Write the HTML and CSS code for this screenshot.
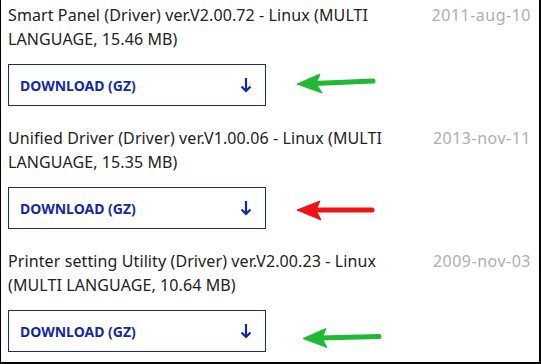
FILE: index.html
```html
<!DOCTYPE html>
<html lang="en">
<head>
    <meta charset="UTF-8">
    <meta name="viewport" content="width=device-width, initial-scale=1.0">
    <title>Linux Drivers</title>
    <link rel="stylesheet" href="styles.css">
</head>
<body>
    <div class="frame">
        <ul class="downloads">
            <li class="item">
                <p class="desc">Smart Panel (Driver) ver.V2.00.72 - Linux (MULTI LANGUAGE, 15.46 MB)</p>
                <span class="date">2011-aug-10</span>
                <a class="btn" href="#">
                    <span>DOWNLOAD (GZ)</span>
                    <svg class="dl-icon" width="12" height="16" viewBox="0 0 12 16"><path d="M6 1V14M1.5 9.5L6 14L10.5 9.5" fill="none" stroke="currentColor" stroke-width="2.2"/></svg>
                </a>
            </li>
            <li class="item">
                <p class="desc">Unified Driver (Driver) ver.V1.00.06 - Linux (MULTI LANGUAGE, 15.35 MB)</p>
                <span class="date">2013-nov-11</span>
                <a class="btn" href="#">
                    <span>DOWNLOAD (GZ)</span>
                    <svg class="dl-icon" width="12" height="16" viewBox="0 0 12 16"><path d="M6 1V14M1.5 9.5L6 14L10.5 9.5" fill="none" stroke="currentColor" stroke-width="2.2"/></svg>
                </a>
            </li>
            <li class="item">
                <p class="desc">Printer setting Utility (Driver) ver.V2.00.23 - Linux (MULTI LANGUAGE, 10.64 MB)</p>
                <span class="date">2009-nov-03</span>
                <a class="btn" href="#">
                    <span>DOWNLOAD (GZ)</span>
                    <svg class="dl-icon" width="12" height="16" viewBox="0 0 12 16"><path d="M6 1V14M1.5 9.5L6 14L10.5 9.5" fill="none" stroke="currentColor" stroke-width="2.2"/></svg>
                </a>
            </li>
        </ul>

        <!-- hand drawn annotation arrows on top of the list -->
        <svg class="marks" width="541" height="364" viewBox="0 0 541 364">
            <g fill="#1fb934" stroke="#1fb934">
                <line x1="314" y1="83.5" x2="373" y2="81" stroke-width="5" stroke-linecap="round"/>
                <polygon points="297,84 320,74 316,83.5 322,93" stroke-width="1" stroke-linejoin="round"/>
            </g>
            <g fill="#f01414" stroke="#f01414">
                <line x1="314" y1="210" x2="372" y2="210" stroke-width="5" stroke-linecap="round"/>
                <polygon points="297,210 320,201 316,210 321,220" stroke-width="1" stroke-linejoin="round"/>
            </g>
            <g fill="#1fb934" stroke="#1fb934">
                <line x1="320" y1="338" x2="379" y2="336.5" stroke-width="5" stroke-linecap="round"/>
                <polygon points="303,338.5 326,328.5 322,338 327,347.5" stroke-width="1" stroke-linejoin="round"/>
            </g>
        </svg>
    </div>
</body>
</html>
```

FILE: styles.css
```css
html, body {
    margin: 0;
    padding: 0;
    background: #fff;
}

body {
    font-family: "Noto Sans", "Open Sans", Arial, sans-serif;
    color: #222;
}

.frame {
    position: relative;
    width: 541px;
    height: 364px;
    box-sizing: border-box;
    border-style: solid;
    border-color: #000;
    border-width: 0 2px 2px 1px; /* screenshot edge, no top line */
    padding: 3px 8px 0 7px;
    overflow: hidden;
}

.downloads {
    list-style: none;
    margin: 0;
    padding: 0;
    display: flex;
    flex-direction: column;
    gap: 20px;
}

.item {
    display: grid;
    grid-template-columns: 1fr auto;
    column-gap: 24px;
    row-gap: 13px;
}

.desc {
    margin: 0;
    font-size: 16px;
    line-height: 24px;
    letter-spacing: 0.1px;
}

.date {
    font-size: 16px;
    line-height: 24px;
    letter-spacing: 0.5px;
    color: #aeaeae;
}

.btn {
    grid-column: 1 / 2;
    width: 258px;
    height: 42px;
    box-sizing: border-box;
    border: 1px solid #1428a0;
    padding: 0 13px 0 11px;
    display: flex;
    align-items: center;
    justify-content: space-between;
    color: #1428a0;
    text-decoration: none;
    font-size: 14px;
    font-weight: 700;
}

.dl-icon {
    display: block;
}

.marks {
    position: absolute;
    left: -1px;
    top: 0;
    pointer-events: none;
}
```
